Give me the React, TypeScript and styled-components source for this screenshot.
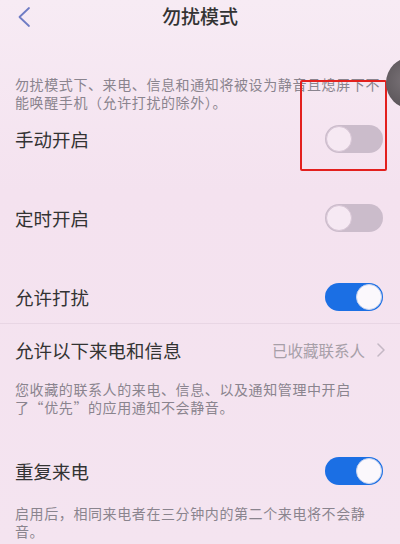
import styled, { createGlobalStyle } from "styled-components";

const GlobalStyle = createGlobalStyle`
  html, body {
    margin: 0;
    padding: 0;
    background: #f5e5f1;
  }
  * {
    box-sizing: border-box;
  }
`;

const Screen = styled.div`
  position: relative;
  width: 400px;
  height: 544px;
  overflow: hidden;
  background: linear-gradient(to bottom, #f7ebf4 0%, #f4e2ef 35%, #f4e4f0 100%);
  font-family: "Noto Sans CJK SC", "Noto Sans", sans-serif;
  color: #333;
`;

const Header = styled.header`
  position: relative;
  height: 30px;
  display: flex;
  align-items: center;
  justify-content: center;
`;

const BackButton = styled.div`
  position: absolute;
  left: 16px;
  top: 6px;
  width: 16px;
  height: 22px;
  display: flex;
`;

const Title = styled.h1`
  margin: 0;
  font-size: 19px;
  font-weight: 500;
  color: #333;
  line-height: 1;
`;

const Note = styled.p<{ $top?: number }>`
  margin: 0;
  padding: 0 15px;
  margin-top: ${(p) => p.$top ?? 0}px;
  font-size: 14px;
  letter-spacing: 0.6px;
  line-height: 17.5px;
  color: #8a848e;
  white-space: nowrap;
`;

const Row = styled.div<{ $h: number; $divider?: boolean }>`
  height: ${(p) => p.$h}px;
  display: flex;
  align-items: center;
  justify-content: space-between;
  padding: 0 17px 0 15px;
  border-bottom: ${(p) => (p.$divider ? "1px solid #e8d6e4" : "none")};
`;

const Label = styled.span`
  font-size: 18.5px;
  color: #333;
`;

const Gap = styled.div<{ $h: number }>`
  height: ${(p) => p.$h}px;
`;

const Track = styled.div<{ $on: boolean }>`
  width: 58px;
  height: 28px;
  border-radius: 14px;
  background: ${(p) => (p.$on ? "#1b6fe4" : "#cbbccb")};
  display: flex;
  align-items: center;
  justify-content: ${(p) => (p.$on ? "flex-end" : "flex-start")};
  padding: 1px;
`;

const Knob = styled.div<{ $on: boolean }>`
  width: 26px;
  height: 26px;
  border-radius: 50%;
  background: ${(p) => (p.$on ? "#fbf8fc" : "#f6e9f3")};
  border: 1px solid ${(p) => (p.$on ? "#c9d4ee" : "#d8c6d6")};
`;

const Value = styled.div`
  display: flex;
  align-items: center;
  gap: 12px;
  font-size: 15.5px;
  color: #a79fa8;
  margin-right: -2px;
`;

const Highlight = styled.div`
  position: absolute;
  left: 300px;
  top: 80px;
  width: 87px;
  height: 91px;
  border: 2.5px solid #e3201e;
  border-radius: 2px;
`;

const Finger = styled.div`
  position: absolute;
  left: 386px;
  top: 57px;
  width: 52px;
  height: 52px;
  border-radius: 50%;
  background: radial-gradient(circle at 40% 45%, #7a7378 0%, #5e585c 60%, #4c474a 100%);
`;

const Toggle = ({ on }: { on: boolean }) => (
  <Track $on={on}>
    <Knob $on={on} />
  </Track>
);

export default function App() {
  return (
    <>
      <GlobalStyle />
      <Screen>
        <Header>
          <BackButton>
            <svg width="16" height="22" viewBox="0 0 16 22">
              <path d="M13 2 L3.5 11 L13 20" fill="none" stroke="#6f7cc4" strokeWidth="1.8" strokeLinecap="round" strokeLinejoin="round" />
            </svg>
          </BackButton>
          <Title>勿扰模式</Title>
        </Header>

        <Note $top={46}>
          勿扰模式下、来电、信息和通知将被设为静音且熄屏下不
          <br />
          能唤醒手机（允许打扰的除外）。
        </Note>

        <Row $h={56}>
          <Label>手动开启</Label>
          <Toggle on={false} />
        </Row>
        <Gap $h={23} />
        <Row $h={56}>
          <Label>定时开启</Label>
          <Toggle on={false} />
        </Row>
        <Gap $h={24} />
        <Row $h={54} $divider>
          <Label>允许打扰</Label>
          <Toggle on />
        </Row>
        <Row $h={52}>
          <Label>允许以下来电和信息</Label>
          <Value>
            已收藏联系人
            <svg width="8" height="14" viewBox="0 0 8 14">
              <path d="M1 1 L7 7 L1 13" fill="none" stroke="#c4b8c4" strokeWidth="1.5" strokeLinecap="round" strokeLinejoin="round" />
            </svg>
          </Value>
        </Row>
        <Note $top={5}>
          您收藏的联系人的来电、信息、以及通知管理中开启
          <br />
          了“优先”的应用通知不会静音。
        </Note>
        <Gap $h={27} />
        <Row $h={56}>
          <Label>重复来电</Label>
          <Toggle on />
        </Row>
        <Note $top={6}>
          启用后，相同来电者在三分钟内的第二个来电将不会静
          <br />
          音。
        </Note>

        <Highlight />
        <Finger />
      </Screen>
    </>
  );
}
